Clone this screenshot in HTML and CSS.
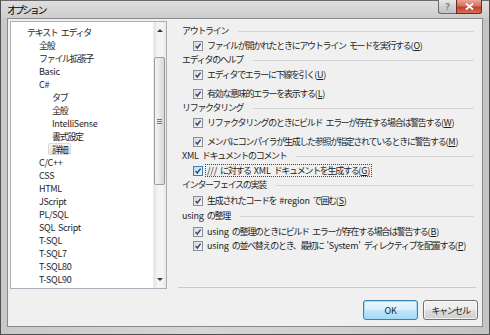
FILE: index.html
```html
<!DOCTYPE html>
<html lang="ja">
<head>
    <meta charset="UTF-8">
    <title>オプション</title>
    <link rel="stylesheet" href="styles.css">
</head>
<body>
    <div class="window">
        <div class="titlebar">
            <span class="title">オプション</span>
            <div class="caption-btns">
                <span class="cap-btn help">?</span>
                <span class="cap-btn close">
                    <svg width="9" height="7" viewBox="0 0 9 7"><path d="M1 0.5 L8 6.5 M8 0.5 L1 6.5" stroke="#fff" stroke-width="1.8"/></svg>
                </span>
            </div>
        </div>

        <div class="client">
            <!-- Дерево категорий -->
            <div class="tree">
                <ul class="tree-list">
                    <li class="lvl0">テキスト エディタ</li>
                    <li class="lvl1">全般</li>
                    <li class="lvl1">ファイル拡張子</li>
                    <li class="lvl1 en">Basic</li>
                    <li class="lvl1 en">C#</li>
                    <li class="lvl2"><span>タブ</span></li>
                    <li class="lvl2"><span>全般</span></li>
                    <li class="lvl2 en"><span>IntelliSense</span></li>
                    <li class="lvl2"><span>書式設定</span></li>
                    <li class="lvl2 selected"><span>詳細</span></li>
                    <li class="lvl1 en">C/C++</li>
                    <li class="lvl1 en">CSS</li>
                    <li class="lvl1 en">HTML</li>
                    <li class="lvl1 en">JScript</li>
                    <li class="lvl1 en">PL/SQL</li>
                    <li class="lvl1 en">SQL Script</li>
                    <li class="lvl1 en">T-SQL</li>
                    <li class="lvl1 en">T-SQL7</li>
                    <li class="lvl1 en">T-SQL80</li>
                    <li class="lvl1 en">T-SQL90</li>
                </ul>
                <div class="vscroll">
                    <div class="sb-btn"><span class="arrow up"></span></div>
                    <div class="track">
                        <div class="thumb" style="margin-top: 18px; height: 128px;"><span class="grip"></span></div>
                    </div>
                    <div class="sb-btn"><span class="arrow down"></span></div>
                </div>
            </div>

            <!-- Настройки -->
            <div class="options">
                <div class="group-title">アウトライン</div>
                <div class="opt"><span class="cb"></span><span class="lbl">ファイルが開かれたときにアウトライン モードを実行する<span class="en">(<u>O</u>)</span></span></div>

                <div class="group-title">エディタのヘルプ</div>
                <div class="opt"><span class="cb"></span><span class="lbl">エディタでエラーに下線を引く<span class="en">(<u>U</u>)</span></span></div>
                <div class="opt next"><span class="cb"></span><span class="lbl">有効な意味的エラーを表示する<span class="en">(<u>L</u>)</span></span></div>

                <div class="group-title">リファクタリング</div>
                <div class="opt"><span class="cb"></span><span class="lbl">リファクタリングのときにビルド エラーが存在する場合は警告する<span class="en">(<u>W</u>)</span></span></div>
                <div class="opt next"><span class="cb"></span><span class="lbl">メンバにコンパイラが生成した参照が指定されているときに警告する<span class="en">(<u>M</u>)</span></span></div>

                <div class="group-title"><span><span class="en">XML </span>ドキュメントのコメント</span></div>
                <div class="opt"><span class="cb hot"></span><span class="lbl focused"><span class="en">/// </span>に対する<span class="en"> XML </span>ドキュメントを生成する<span class="en">(<u>G</u>)</span></span></div>

                <div class="group-title">インターフェイスの実装</div>
                <div class="opt loose"><span class="cb"></span><span class="lbl">生成されたコードを<span class="en"> #region </span>で囲む<span class="en">(<u>S</u>)</span></span></div>

                <div class="group-title loose"><span><span class="en">using </span>の整理</span></div>
                <div class="opt loose"><span class="cb"></span><span class="lbl"><span class="en">using </span>の整理のときにビルド エラーが存在する場合は警告する<span class="en">(<u>B</u>)</span></span></div>
                <div class="opt loose"><span class="cb"></span><span class="lbl"><span class="en">using </span>の並べ替えのとき、最初に<span class="en"> 'System' </span>ディレクティブを配置する<span class="en">(<u>P</u>)</span></span></div>

                <div class="separator"></div>
            </div>

            <div class="buttons">
                <button class="btn default">OK</button>
                <button class="btn">キャンセル</button>
            </div>
        </div>
    </div>
</body>
</html>
```

FILE: styles.css
```css
/* Базовые стили */
* {
    margin: 0;
    padding: 0;
    box-sizing: border-box;
}

body {
    width: 490px;
    height: 335px;
    overflow: hidden;
    font-family: "Noto Sans CJK JP", "Noto Sans", sans-serif;
    font-size: 9px;
    letter-spacing: -1.3px;
    word-spacing: 2.6px;
    color: #1e1e1e;
    background: #c8c8c8;
}

/* Латиница уже, чем кана, поэтому отдельный трекинг */
.en {
    letter-spacing: -0.2px;
    word-spacing: 1.2px;
}

/* Окно */
.window {
    width: 490px;
    height: 335px;
    display: flex;
    flex-direction: column;
    padding: 0 6px 7px;
    border: 1px solid #4f4f4f;
    border-top-color: #6a6a6a;
    background: linear-gradient(90deg, #c9c9c9, #d6d6d6 40%, #cfcfcf 70%, #c4c4c4);
}

.titlebar {
    height: 17px;
    margin: 0 -6px;
    padding: 0 7px 0 6px;
    display: flex;
    align-items: flex-start;
    background: linear-gradient(180deg, #dedede, #cdcdcd);
}

.title {
    font-size: 10px;
    line-height: 17px;
    letter-spacing: -2.4px;
    color: #000;
}

.caption-btns {
    margin-left: auto;
    margin-top: -1px;
    display: flex;
}

.cap-btn {
    height: 14px;
    display: flex;
    align-items: center;
    justify-content: center;
    border: 1px solid #6b6b6b;
    border-top: none;
}

.cap-btn.help {
    width: 18px;
    border-radius: 0 0 0 3px;
    border-right: none;
    background: linear-gradient(180deg, #e9e9e9, #d0d0d0 50%, #c2c2c2);
    color: #8a8a8a;
    font-family: "DejaVu Sans", sans-serif;
    font-weight: bold;
    font-size: 9px;
    letter-spacing: 0;
}

.cap-btn.close {
    width: 26px;
    border-color: #6a2b22;
    border-radius: 0 0 3px 0;
    background: linear-gradient(180deg, #e9a596, #d6715e 45%, #c4412a 55%, #d6705a);
}

/* Клиентская область */
.client {
    flex: 1;
    min-height: 0;
    display: grid;
    grid-template-columns: 157px minmax(0, 1fr);
    grid-template-rows: 268px 20px;
    column-gap: 11px;
    row-gap: 11px;
    padding: 2px 6px 5px 2px;
    border: 1px solid #8a8a8a;
    background: #f0f0f0;
}

/* Дерево */
.tree {
    display: flex;
    border: 1px solid #a9afb8;
    background: #fff;
    overflow: hidden;
}

.tree-list {
    flex: 1;
    list-style: none;
    padding-top: 4px;
}

.tree-list li {
    height: 13px;
    line-height: 13px;
    white-space: nowrap;
}

.tree-list .en { letter-spacing: -0.3px; }

.tree-list .lvl0 { padding-left: 16px; }
.tree-list .lvl1 { padding-left: 28px; }
.tree-list .lvl2 { padding-left: 37px; }

.tree-list .lvl2 span {
    display: inline-block;
    padding: 0 3px;
    height: 12px;
    line-height: 12px;
    border: 1px solid transparent;
}

.tree-list .selected span {
    background: linear-gradient(180deg, #f6f6f6, #e3e3e3);
    border-color: #d9d9d9;
    border-radius: 2px;
}

/* Полоса прокрутки */
.vscroll {
    width: 13px;
    flex: none;
    display: flex;
    flex-direction: column;
    background: linear-gradient(90deg, #e4e4e4, #f4f4f4 30%, #f4f4f4 70%, #e6e6e6);
    border-left: 1px solid #ececec;
}

.sb-btn {
    height: 17px;
    display: flex;
    align-items: center;
    justify-content: center;
}

.arrow {
    width: 0;
    height: 0;
    border-left: 3px solid transparent;
    border-right: 3px solid transparent;
}

.arrow.up { border-bottom: 3px solid #3a3a3a; }
.arrow.down { border-top: 3px solid #3a3a3a; }

.track {
    flex: 1;
    padding: 0 1px 0 0;
}

.thumb {
    display: flex;
    align-items: center;
    justify-content: center;
    border: 1px solid #9b9b9b;
    border-radius: 2px;
    background: linear-gradient(90deg, #f3f3f3, #e8e8e8 50%, #d6d6d6);
}

.grip {
    width: 5px;
    height: 5px;
    border-top: 1px solid #777;
    border-bottom: 1px solid #777;
    position: relative;
}

.grip::after {
    content: "";
    position: absolute;
    left: 0;
    right: 0;
    top: 1px;
    border-top: 1px solid #777;
}

/* Панель опций */
.options {
    display: flex;
    flex-direction: column;
    padding: 2px 2px 0 0;
}

.group-title {
    height: 16px;
    line-height: 16px;
    padding-left: 4px;
    display: flex;
    align-items: center;
    gap: 10px;
    white-space: nowrap;
}

.group-title::after {
    content: "";
    flex: 1;
    height: 1px;
    background: #d5d5d5;
}

.group-title.loose { margin-top: 1px; }

.opt {
    height: 13px;
    padding-left: 15px;
    display: flex;
    align-items: center;
    gap: 2px;
    white-space: nowrap;
}

.opt.next { margin-top: 6px; }
.opt.loose { margin-top: 1px; }

.cb {
    width: 10px;
    height: 10px;
    flex: none;
    border: 1px solid #8e8f8f;
    background:
        url("data:image/svg+xml,%3Csvg xmlns='http://www.w3.org/2000/svg' width='8' height='8'%3E%3Cpath d='M1.6 4 L3.3 6 L6.6 1.6' stroke='%23334a78' stroke-width='1.5' fill='none'/%3E%3C/svg%3E") center no-repeat,
        linear-gradient(135deg, #d8d8d8, #f8f8f8);
}

.cb.hot {
    border-color: #3c7fb1;
    background:
        url("data:image/svg+xml,%3Csvg xmlns='http://www.w3.org/2000/svg' width='8' height='8'%3E%3Cpath d='M1.6 4 L3.3 6 L6.6 1.6' stroke='%23334a78' stroke-width='1.5' fill='none'/%3E%3C/svg%3E") center no-repeat,
        linear-gradient(135deg, #b9dcf2, #eef8ff);
}

.lbl {
    padding: 0 1px;
    line-height: 11px;
    border: 1px solid transparent;
}

.lbl.focused {
    border: 1px dotted #444;
}

.separator {
    margin-top: auto;
    margin-bottom: 1px;
    margin-right: -2px;
    height: 1px;
    background: #c9c9c9;
}

/* Кнопки */
.buttons {
    grid-column: 2;
    justify-self: end;
    margin-right: -2px;
    display: flex;
    gap: 5px;
}

.btn {
    width: 55px;
    height: 20px;
    font-family: inherit;
    font-size: 9px;
    letter-spacing: -1.4px;
    color: #1e1e1e;
    border: 1px solid #707070;
    border-radius: 3px;
    background: linear-gradient(180deg, #f2f2f2, #ebebeb 49%, #dddddd 51%, #cfcfcf);
    box-shadow: inset 0 0 0 1px rgba(255,255,255,0.7);
}

.btn.default {
    border-color: #3c7fb1;
    letter-spacing: -0.2px;
    background: linear-gradient(180deg, #eaf6fd, #d9f0fc 49%, #bee6fd 51%, #a7d9f5);
    box-shadow: inset 0 0 0 1px #9fdcf8;
}
```
